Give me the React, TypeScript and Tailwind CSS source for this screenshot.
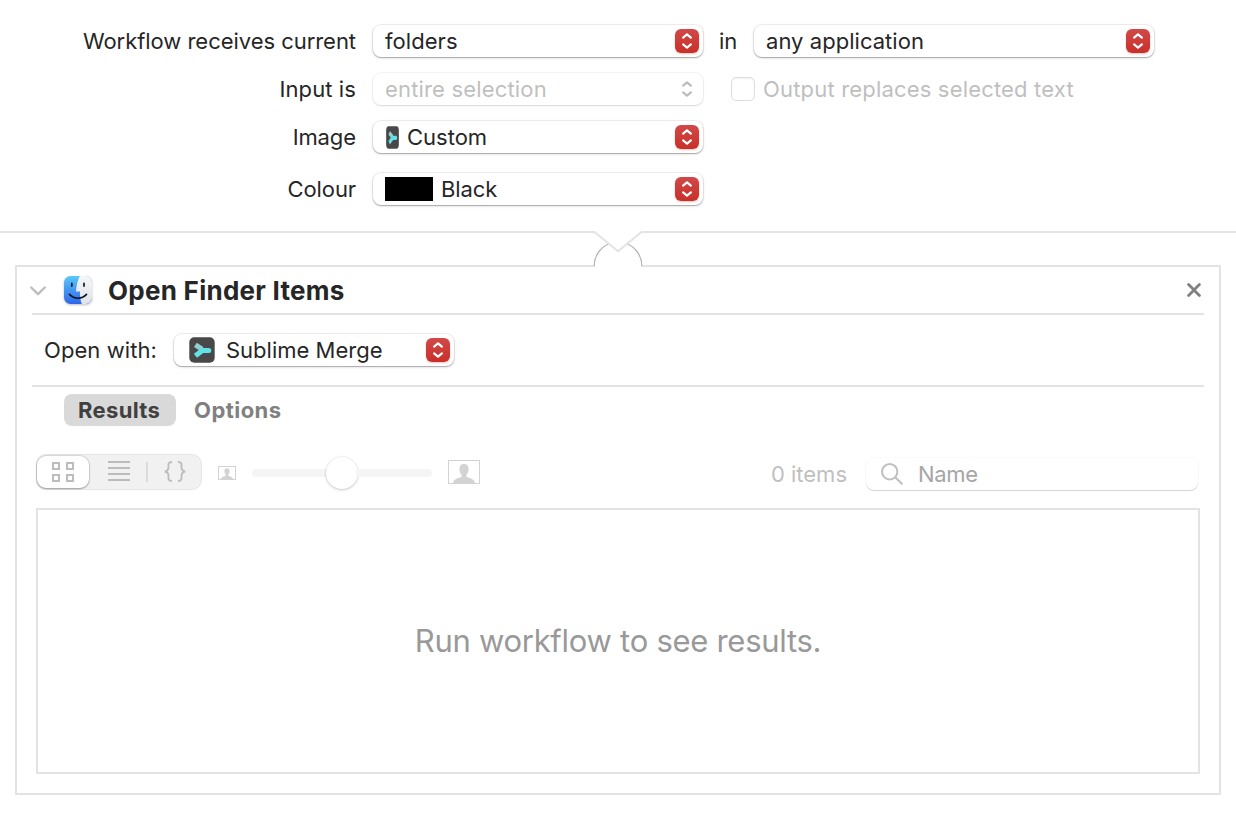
import type { ReactNode } from "react";

function Chevrons({ className }: { className: string }) {
  return (
    <svg width="24" height="24" viewBox="0 0 24 24" fill="none" strokeWidth="2.2" strokeLinecap="round" strokeLinejoin="round" className={className}>
      <path d="M8.1 8.6 12 5.4l3.9 3.2M8.1 15.400l3.900 3.200 3.900-3.200" />
    </svg>
  );
}

function PopUp({ width, disabled = false, children }: { width: string; disabled?: boolean; children: ReactNode }) {
  return (
    <div
      className={`${width} flex h-8 items-center justify-between rounded-[8px] bg-white pr-1 pl-3 ${
        disabled
          ? "text-[#bfbfbf] shadow-[0_0_0_1px_rgba(0,0,0,0.04),0_1px_2px_rgba(0,0,0,0.12)]"
          : "shadow-[0_0_0_1px_rgba(0,0,0,0.06),0_1px_1px_rgba(0,0,0,0.2),0_1px_3px_rgba(0,0,0,0.15)]"
      }`}
    >
      <div className="flex items-center">{children}</div>
      {disabled ? (
        <Chevrons className="stroke-[#bcbcbc]" />
      ) : (
        <span className="h-6 w-6 rounded-[6px] bg-linear-to-b from-[#d04848] to-[#c92f29] shadow-[0_1px_2px_rgba(200,50,45,0.3)]">
          <Chevrons className="stroke-white" />
        </span>
      )}
    </div>
  );
}

function Label({ children }: { children: ReactNode }) {
  return <div className="w-[356px] text-right">{children}</div>;
}

function MergeIcon({ width, height }: { width: number; height: number }) {
  return (
    <svg width={width} height={height} viewBox="0 0 26 26" preserveAspectRatio="none">
      <rect x="0.3" y="0.3" width="25.4" height="25.4" rx="5" fill="#484848" />
      <path d="M6.400 7.800 13 12.200" stroke="#93cfd2" strokeWidth="5" fill="none" />
      <path d="M6.400 18.800 13.400 13.400H19.800" stroke="#62e2e4" strokeWidth="5" strokeLinejoin="round" fill="none" />
      <circle cx="19.800" cy="13.400" r="2.500" fill="#62e2e4" />
    </svg>
  );
}

function FinderIcon() {
  return (
    <svg width="32" height="32" viewBox="0 0 32 32" className="overflow-visible drop-shadow-[0_1px_1px_rgba(0,0,0,0.25)]">
      <defs>
        <linearGradient id="finderBlue" x1="0" y1="0" x2="0" y2="1">
          <stop offset="0" stopColor="#5ac8f8" />
          <stop offset="1" stopColor="#2f66ea" />
        </linearGradient>
        <linearGradient id="finderWhite" x1="0" y1="0" x2="0" y2="1">
          <stop offset="0" stopColor="#f6f6f7" />
          <stop offset="1" stopColor="#dfe2e8" />
        </linearGradient>
        <clipPath id="finderShape">
          <rect x="2" y="2" width="28" height="28" rx="6.5" />
        </clipPath>
      </defs>
      <g clipPath="url(#finderShape)">
        <rect x="2" y="2" width="28" height="28" fill="url(#finderBlue)" />
        <path d="M17.800 2C15.600 6.800 14.200 11.800 14 17.600h4c-.2 4.400.2 8.400 1.800 12.400H30V2z" fill="url(#finderWhite)" />
      </g>
      <path d="M9.800 9.400v2.600M22 9.400v2.600" stroke="#15233a" strokeWidth="1.800" strokeLinecap="round" />
      <path d="M7.500 20.400c4.700 5.100 12.300 5.100 17 0" stroke="#101722" strokeWidth="1.700" fill="none" strokeLinecap="round" />
    </svg>
  );
}

function Portrait({ width, height }: { width: number; height: number }) {
  return (
    <svg width={width} height={height} viewBox={`0 0 ${width} ${height}`}>
      <rect x="0.5" y="0.5" width={width - 1} height={height - 1} fill="none" stroke="#d3d3d3" />
      <svg width={width} height={height} viewBox="0 0 32 24" preserveAspectRatio="none">
        <path
          d="M16 4c-3 0-4.600 1.900-4.600 4.700 0 2.500.8 4.600 2.100 5.800v2.200c-1.500 1.200-7.900 1.500-8.500 6.300h22c-.6-4.800-7-5.100-8.500-6.300v-2.200c1.300-1.200 2.100-3.300 2.100-5.800C20.600 5.900 19 4 16 4z"
          fill="#d3d3d3"
        />
      </svg>
    </svg>
  );
}

export default function App() {
  return (
    <div className="flex h-[818px] w-[1236px] flex-col overflow-hidden bg-white font-['Inter',sans-serif] text-[22px] leading-8 whitespace-nowrap text-[#262626]">
      <section className="flex h-[231px] flex-col pt-[25px]">
        <div className="flex items-center">
          <Label><span className="tracking-[-0.04px]">Workflow receives current</span></Label>
          <div className="ml-[17px] flex items-center">
            <PopUp width="w-[330px]"><span className="tracking-[0.05px]">folders</span></PopUp>
            <span className="w-[51px] pl-4">in</span>
            <PopUp width="w-[400px]"><span className="tracking-[0.04px]">any application</span></PopUp>
          </div>
        </div>
        <div className="mt-4 flex items-center">
          <Label><span className="tracking-[0.1px]">Input is</span></Label>
          <div className="ml-[17px] flex items-center">
            <PopUp width="w-[330px]" disabled>
              <span className="tracking-[0.17px]">entire selection</span>
            </PopUp>
            <span className="ml-7 h-6 w-6 rounded-[5px] border border-[#dedede] bg-white shadow-[inset_0_1px_2px_rgba(0,0,0,0.06)]" />
            <span className="ml-2 tracking-[0.18px] text-[#bfbfbf]">Output replaces selected text</span>
          </div>
        </div>
        <div className="mt-4 flex items-center">
          <Label><span className="tracking-[-0.1px]">Image</span></Label>
          <div className="ml-[17px]">
            <PopUp width="w-[330px]">
              <span className="ml-px flex w-[21px]"><MergeIcon width={13} height={23} /></span>
              Custom
            </PopUp>
          </div>
        </div>
        <div className="mt-5 flex items-center">
          <Label><span className="tracking-[-0.1px]">Colour</span></Label>
          <div className="ml-[17px]">
            <PopUp width="w-[330px]">
              <span className="mr-2 h-6 w-12 bg-black" />
              <span className="tracking-[-0.1px]">Black</span>
            </PopUp>
          </div>
        </div>
      </section>

      <div className="z-10 flex h-[34px]">
        <div className="h-0.5 flex-1 bg-[#e3e3e3]" />
        <svg width="50" height="37" viewBox="0 0 50 37" className="shrink-0 overflow-visible">
          <path d="M2 33h46v4H2z" fill="#ffffff" />
          <path d="M1.200 35A24 24 0 0 1 15.500 13M34.500 13A24 24 0 0 1 48.800 35" fill="none" stroke="#b0b0b0" strokeWidth="1.200" />
          <path d="M0 1H1.500L25 20.300 48.500 1H50" fill="none" stroke="#e3e3e3" strokeWidth="2" />
        </svg>
        <div className="h-0.5 flex-1 bg-[#e3e3e3]" />
      </div>

      <section className="mx-[15px] flex h-[530px] flex-col border-2 border-[#e3e3e3] px-[15px]">
        <header className="flex h-12 items-center border-b-2 border-[#e3e3e3]">
          <svg width="16" height="10" viewBox="0 0 16 10" fill="none" stroke="#bdbdbd" strokeWidth="2.400" strokeLinecap="round" strokeLinejoin="round" className="mt-px -ml-0.5">
            <path d="M1.200 1.500 8 8.200l6.800-6.700" />
          </svg>
          <span className="-mt-px ml-4"><FinderIcon /></span>
          <h1 className="mt-0.5 ml-3.5 text-[26px] font-bold tracking-[0.27px]">Open Finder Items</h1>
          <svg width="14" height="14" viewBox="0 0 14 14" stroke="#808080" strokeWidth="2.800" strokeLinecap="round" className="mr-[3px] ml-auto">
            <path d="m1.600 1.600 10.800 10.800M12.400 1.600 1.600 12.400" />
          </svg>
        </header>

        <div className="flex h-[72px] items-center border-b-2 border-[#e3e3e3] pl-3">
          <span className="w-[130px] tracking-[0.08px]">Open with:</span>
          <PopUp width="w-[280px]">
            <span className="ml-[3px] flex w-[37px]"><MergeIcon width={26} height={26} /></span>
            Sublime Merge
          </PopUp>
        </div>

        <nav className="mt-[7px] ml-8 flex h-8 font-bold">
          <span className="w-28 rounded-lg bg-[#d9d9d9] pl-3.5 tracking-[0.35px] text-[#404040]">Results</span>
          <span className="ml-[18px] tracking-[0.45px] text-[#808080]">Options</span>
        </nav>

        <div className="mt-7 ml-1 flex h-9 items-center">
          <div className="flex h-9 w-[166px] items-center rounded-[10px] border border-[#e5e5e5] bg-[#f1f1f1]">
            <span className="-mt-px flex h-8 w-[52px] items-center justify-center rounded-[9px] bg-white shadow-[0_0_1px_1px_rgba(0,0,0,0.1),0_1px_2px_rgba(0,0,0,0.28)]">
              <svg width="22" height="20" viewBox="0 0 22 20" fill="none" stroke="#bcbcbc" strokeWidth="2">
                <path d="M1 1h6v6H1zM15 1h6v6h-6zM1 13h6v6H1zM15 13h6v6h-6z" />
              </svg>
            </span>
            <svg width="22" height="20" viewBox="0 0 22 20" stroke="#bcbcbc" strokeWidth="2" className="-mt-0.5 ml-[19px]">
              <path d="M0 1h22M0 7h22M0 13h22M0 19h22" />
            </svg>
            <span className="ml-4 h-5 w-0.5 bg-[#dcdcdc]" />
            <svg width="22" height="21" viewBox="0 0 22 21" fill="none" stroke="#bcbcbc" strokeWidth="1.800" className="-mt-0.5 ml-4">
              <path d="M8 1C3.500 1 4.500 3.800 4.500 6.300S3.800 10 .8 10.500C3.800 11 4.500 12 4.500 14.700S3.500 20 8 20M14 1c4.500 0 3.500 2.800 3.500 5.300s.7 3.700 3.700 4.200c-3 .5-3.700 1.500-3.700 4.200S18.500 20 14 20" />
            </svg>
          </div>
          <span className="mt-0.5 ml-4"><Portrait width={18} height={14} /></span>
          <div className="mt-0.5 ml-4 flex h-8 w-[180px] items-center">
            <span className="h-2 w-[76px] rounded-l-full bg-[#f5f5f5]" />
            <span className="-mx-0.5 h-8 w-8 rounded-full bg-white shadow-[0_0_0_1px_rgba(0,0,0,0.03),0_1px_3px_rgba(0,0,0,0.2)]" />
            <span className="h-2 flex-1 rounded-r-full bg-[#f5f5f5]" />
          </div>
          <span className="ml-4"><Portrait width={32} height={24} /></span>
          <span className="mt-1 ml-auto text-[#bfbfbf]">0 items</span>
          <div className="mt-1 mr-1.5 ml-[19px] flex h-8 w-[332px] items-center rounded-[8px] bg-white pl-[15px] shadow-[0_0_0_1px_rgba(0,0,0,0.015),0_1px_1px_rgba(0,0,0,0.16)]">
            <svg width="22" height="22" viewBox="0 0 22 22" fill="none" stroke="#bfbfbf" strokeWidth="2" strokeLinecap="round">
              <circle cx="8.700" cy="8.700" r="7.700" />
              <path d="m14.500 14.500 6.300 6.300" />
            </svg>
            <span className="ml-[15px] tracking-[-0.3px] text-[#a6a6a6]">Name</span>
          </div>
        </div>

        <div className="mt-[18px] ml-1 flex h-[266px] w-[1164px] items-center justify-center border-2 border-[#e3e3e3] text-[31px] tracking-[-0.28px] text-[#999999]">
          Run workflow to see results.
        </div>
      </section>
    </div>
  );
}
